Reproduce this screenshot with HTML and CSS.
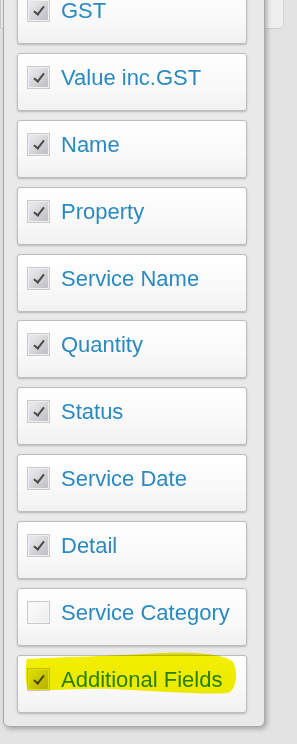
FILE: index.html
```html
<!DOCTYPE html>
<html lang="en">

<head>
    <meta charset="UTF-8">
    <meta name="viewport" content="width=device-width, initial-scale=1.0">
    <title>Columns</title>
    <link rel="stylesheet" href="styles.css">
</head>

<body>

    <div class="toolbar"></div>

    <!-- column picker dropdown -->
    <div class="column-menu">
        <label class="column-item"><span class="check checked"></span><span class="label">GST</span></label>
        <label class="column-item"><span class="check checked"></span><span class="label">Value inc.GST</span></label>
        <label class="column-item"><span class="check checked"></span><span class="label">Name</span></label>
        <label class="column-item"><span class="check checked"></span><span class="label">Property</span></label>
        <label class="column-item"><span class="check checked"></span><span class="label">Service Name</span></label>
        <label class="column-item"><span class="check checked"></span><span class="label">Quantity</span></label>
        <label class="column-item"><span class="check checked"></span><span class="label">Status</span></label>
        <label class="column-item"><span class="check checked"></span><span class="label">Service Date</span></label>
        <label class="column-item"><span class="check checked"></span><span class="label">Detail</span></label>
        <label class="column-item"><span class="check"></span><span class="label">Service Category</span></label>
        <label class="column-item highlighted">
            <span class="check checked"></span><span class="label">Additional Fields</span>
            <svg class="marker" width="230" height="50" viewBox="0 0 230 50">
                <path d="M5 6 C 40 4, 90 3, 140 0 C 175 -1, 200 1, 210 8 C 216 14, 216 36, 206 40 C 180 42, 140 38, 90 36 C 60 35, 30 38, 6 37 C 3 30, 3 12, 5 6 Z" />
            </svg>
        </label>
    </div>

</body>

</html>
```

FILE: styles.css
```css
body {
    font-family: "Liberation Sans", Arial, sans-serif;
    margin: 0;
    padding: 0;
    height: 744px;
    overflow: hidden;
    background-color: #e3e3e3;
    position: relative;
}

.toolbar {
    width: 282px;
    height: 28px;
    background-color: #efefef;
    border-bottom: 1px solid #cfcfcf;
    border-right: 1px solid #d6d6d6;
    border-left: 1px solid #c4c4c4;
    border-bottom-right-radius: 5px;
    box-sizing: content-box;
    margin-left: 0;
}

.column-menu {
    position: absolute;
    left: 3px;
    top: -28px;
    width: 260px;
    box-sizing: content-box;
    padding: 13px 17px 13px 13px;
    background-color: #e9e9e9;
    border: 1px solid #a9a9a9;
    border-radius: 0 0 6px 6px;
    box-shadow: 2px 2px 5px rgba(0, 0, 0, 0.28);
    display: flex;
    flex-direction: column;
    gap: 8.9px;
    width: 230px;
}

.column-item {
    position: relative;
    height: 58px;
    box-sizing: border-box;
    padding: 12px 9px 0 9px;
    display: flex;
    align-items: flex-start;
    gap: 11px;
    background: linear-gradient(#ffffff, #f9f9f9 60%, #f1f1f1);
    border: 1px solid #bdbdbd;
    border-radius: 3px;
    box-shadow: 0 1px 2px rgba(0, 0, 0, 0.22);
}

.check {
    position: relative;
    flex: none;
    width: 23px;
    height: 23px;
    box-sizing: border-box;
    border: 1px solid #cacaca;
    background: linear-gradient(135deg, #fdfdfd, #ececec);
    box-shadow: inset 0 0 0 1px #f6f6f6;
}

.check.checked {
    background: linear-gradient(135deg, #e6e6ea 20%, #c2c2c8 85%);
    box-shadow: inset 0 0 0 1px #efeff2;
}

.check.checked::after {
    content: "";
    position: absolute;
    left: 8px;
    top: 4px;
    width: 4px;
    height: 9px;
    border-right: 2px solid #4a4a4a;
    border-bottom: 2px solid #4a4a4a;
    transform: rotate(38deg);
}

.label {
    font-size: 22px;
    line-height: 23px;
    color: #2a89bf;
    white-space: nowrap;
}

.marker {
    position: absolute;
    left: 4px;
    top: -3px;
    pointer-events: none;
    mix-blend-mode: multiply;
    overflow: visible;
}

.marker path {
    fill: #f3ef00;
}
```
